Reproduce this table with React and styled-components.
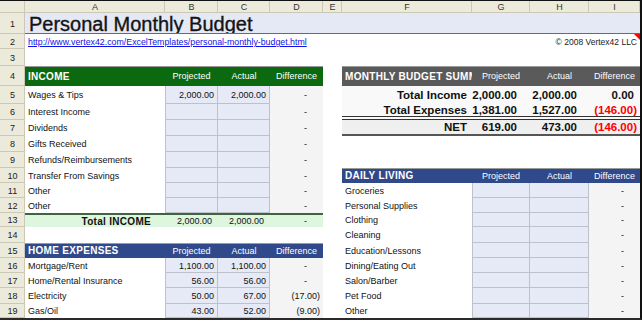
import React from "react";
import styled, { createGlobalStyle } from "styled-components";

const GlobalStyle = createGlobalStyle`
  html, body { margin: 0; padding: 0; background: #fff; }
  body {
    width: 642px;
    height: 320px;
    overflow: hidden;
    font-family: "Liberation Sans", Arial, sans-serif;
  }
`;

const GREEN = "#0b6a10";
const BLUE = "#30498a";
const GRAY = "#5a5a5a";

const left = [
  { t: "head", label: "INCOME", bg: GREEN },
  { t: "item", label: "Wages & Tips", p: "2,000.00", a: "2,000.00", d: "-" },
  { t: "item", label: "Interest Income", d: "-" },
  { t: "item", label: "Dividends", d: "-" },
  { t: "item", label: "Gifts Received", d: "-" },
  { t: "item", label: "Refunds/Reimbursements", d: "-" },
  { t: "item", label: "Transfer From Savings", d: "-" },
  { t: "item", label: "Other", d: "-" },
  { t: "item", label: "Other", d: "-" },
  { t: "total", label: "Total INCOME", p: "2,000.00", a: "2,000.00", d: "-" },
  { t: "blank" },
  { t: "head", label: "HOME EXPENSES", bg: BLUE },
  { t: "item", label: "Mortgage/Rent", p: "1,100.00", a: "1,100.00", d: "-" },
  { t: "item", label: "Home/Rental Insurance", p: "56.00", a: "56.00", d: "-" },
  { t: "item", label: "Electricity", p: "50.00", a: "67.00", d: "(17.00)" },
  { t: "item", label: "Gas/Oil", p: "43.00", a: "52.00", d: "(9.00)" },
];

const right = [
  { t: "head", label: "MONTHLY BUDGET SUMMARY", bg: GRAY },
  { t: "sum", label: "Total Income", p: "2,000.00", a: "2,000.00", d: "0.00" },
  { t: "sum", label: "Total Expenses", p: "1,381.00", a: "1,527.00", d: "(146.00)", rule: "double" },
  { t: "sum", label: "NET", p: "619.00", a: "473.00", d: "(146.00)", shade: true, rule: "single" },
  { t: "blank" },
  { t: "blank" },
  { t: "head", label: "DAILY LIVING", bg: BLUE },
  { t: "item", label: "Groceries", d: "-" },
  { t: "item", label: "Personal Supplies", d: "-" },
  { t: "item", label: "Clothing", d: "-" },
  { t: "item", label: "Cleaning", d: "-" },
  { t: "item", label: "Education/Lessons", d: "-" },
  { t: "item", label: "Dining/Eating Out", d: "-" },
  { t: "item", label: "Salon/Barber", d: "-" },
  { t: "item", label: "Pet Food", d: "-" },
  { t: "item", label: "Other", d: "-" },
];

function Block({ row }) {
  if (row.t === "head") {
    return (
      <>
        <HeadTitle $bg={row.bg}>{row.label}</HeadTitle>
        <HeadCol $bg={row.bg}>Projected</HeadCol>
        <HeadCol $bg={row.bg}>Actual</HeadCol>
        <HeadCol $bg={row.bg}>Difference</HeadCol>
      </>
    );
  }
  if (row.t === "item") {
    return (
      <>
        <Label>{row.label}</Label>
        <Input $first>{row.p}</Input>
        <Input>{row.a}</Input>
        <Diff $dash={row.d === "-"}>{row.d}</Diff>
      </>
    );
  }
  if (row.t === "total") {
    return (
      <>
        <TotalCell $label>{row.label}</TotalCell>
        <TotalCell>{row.p}</TotalCell>
        <TotalCell>{row.a}</TotalCell>
        <TotalCell $dash>{row.d}</TotalCell>
      </>
    );
  }
  if (row.t === "sum") {
    const neg = row.d.startsWith("(");
    return (
      <>
        <SumCell $shade={row.shade} $rule={row.rule} $pad={5}>{row.label}</SumCell>
        <SumCell $shade={row.shade} $rule={row.rule} $pad={13}>{row.p}</SumCell>
        <SumCell $shade={row.shade} $rule={row.rule} $pad={12}>{row.a}</SumCell>
        <SumCell $shade={row.shade} $rule={row.rule} $pad={neg ? 3 : 6} $neg={neg}>
          {row.d}
        </SumCell>
      </>
    );
  }
  return (
    <>
      <Cell />
      <Cell />
      <Cell />
      <Cell />
    </>
  );
}

export default function App() {
  const cols = ["A", "B", "C", "D", "E", "F", "G", "H", "I"];
  return (
    <>
      <GlobalStyle />
      <Frame>
        <Sheet>
          <ColHead />
          {cols.map((c) => (
            <ColHead key={c}>{c}</ColHead>
          ))}

          <RowHead>1</RowHead>
          <TitleCell>Personal Monthly Budget</TitleCell>

          <RowHead>2</RowHead>
          <LinkCell>
            <a href="#top">http://www.vertex42.com/ExcelTemplates/personal-monthly-budget.html</a>
          </LinkCell>
          <CopyCell>
            © 2008 Vertex42 LLC
            <Comment />
          </CopyCell>

          <RowHead>3</RowHead>
          <Spacer />

          {left.map((row, i) => (
            <React.Fragment key={i}>
              <RowHead>{i + 4}</RowHead>
              <Block row={row} />
              <Cell />
              <Block row={right[i]} />
            </React.Fragment>
          ))}
        </Sheet>
      </Frame>
    </>
  );
}

const Frame = styled.div`
  width: 640px;
  height: 317px;
  border-top: 1px solid #111;
  border-right: 2px solid #111;
  border-bottom: 2px solid #2a2a2a;
  overflow: hidden;
`;

const Sheet = styled.div`
  display: grid;
  grid-template-columns: 25px 140px 53px 52px 53px 19px 130px 58px 59px 51px;
  grid-template-rows:
    12px 21px 15px 17px 20px 18px repeat(4, 16px) repeat(3, 15px)
    14px 16px repeat(3, 15px) 16px 14px;
  font-size: 9px;
  color: #111;
`;

const Cell = styled.div`
  display: flex;
  align-items: center;
  min-width: 0;
  overflow: hidden;
  white-space: nowrap;
`;

const ColHead = styled(Cell)`
  justify-content: center;
  background: #ecebdb;
  box-shadow: inset -1px -1px 0 #cbc8b6;
  color: #333;
  font-size: 9px;
`;

const RowHead = styled(Cell)`
  justify-content: center;
  background: #ecebdb;
  box-shadow: inset -1px -1px 0 #cbc8b6;
  color: #222;
  font-size: 9px;
`;

const TitleCell = styled(Cell)`
  grid-column: span 9;
  background: #e5e9f5;
  border-bottom: 1px solid #6b6b6b;
  padding: 2px 0 0 4px;
  font-size: 20px;
  color: #141414;
  -webkit-text-stroke: 0.35px #141414;
`;

const LinkCell = styled(Cell)`
  grid-column: span 6;
  align-items: flex-end;
  padding: 0 0 2px 3px;
  font-size: 8.8px;

  a {
    color: #1010e8;
    text-decoration: underline;
  }
`;

const CopyCell = styled(Cell)`
  grid-column: span 3;
  position: relative;
  justify-content: flex-end;
  align-items: flex-end;
  padding: 0 3px 2px 0;
  font-size: 8.5px;
  color: #222;
  overflow: visible;
`;

const Comment = styled.span`
  position: absolute;
  top: 0;
  right: 0;
  width: 0;
  height: 0;
  border-top: 6px solid #ff0000;
  border-left: 6px solid transparent;
`;

const Spacer = styled.div`
  grid-column: span 9;
`;

const HeadTitle = styled(Cell)`
  background: ${(p) => p.$bg};
  box-shadow: inset 0 1px 0 #9a9a9a;
  color: #fff;
  font-weight: bold;
  font-size: 10px;
  letter-spacing: 0.3px;
  padding-left: 3px;
`;

const HeadCol = styled(Cell)`
  justify-content: center;
  background: ${(p) => p.$bg};
  box-shadow: inset 0 1px 0 #9a9a9a;
  color: #fff;
  font-size: 9px;
`;

const Label = styled(Cell)`
  padding-left: 3px;
`;

const Input = styled(Cell)`
  justify-content: flex-end;
  padding-right: 4px;
  background: #e6eaf6;
  box-shadow: inset -1px -1px 0 #bdc1cc ${(p) => (p.$first ? ", inset 1px 0 0 #bdc1cc" : "")};
`;

const Diff = styled(Cell)`
  justify-content: flex-end;
  padding-right: ${(p) => (p.$dash ? "16px" : "3px")};
  background: #f4f4f4;
`;

const TotalCell = styled(Cell)`
  justify-content: flex-end;
  padding-right: ${(p) => (p.$label ? "14px" : p.$dash ? "16px" : "6px")};
  background: #ddf6dd;
  border-top: 2px solid #3f643f;
  font-weight: ${(p) => (p.$label ? "bold" : "normal")};
  font-size: ${(p) => (p.$label ? "10px" : "9px")};
  letter-spacing: ${(p) => (p.$label ? "0.3px" : "0")};
`;

const SumCell = styled(Cell)`
  justify-content: flex-end;
  padding-right: ${(p) => p.$pad}px;
  background: ${(p) => (p.$shade ? "#efefef" : "#f9f9f9")};
  color: ${(p) => (p.$neg ? "#ff0000" : "#111")};
  font-weight: bold;
  font-size: 11.5px;
  border-bottom: ${(p) =>
    p.$rule === "double" ? "4px double #333" : p.$rule === "single" ? "2px solid #555" : "none"};
`;
